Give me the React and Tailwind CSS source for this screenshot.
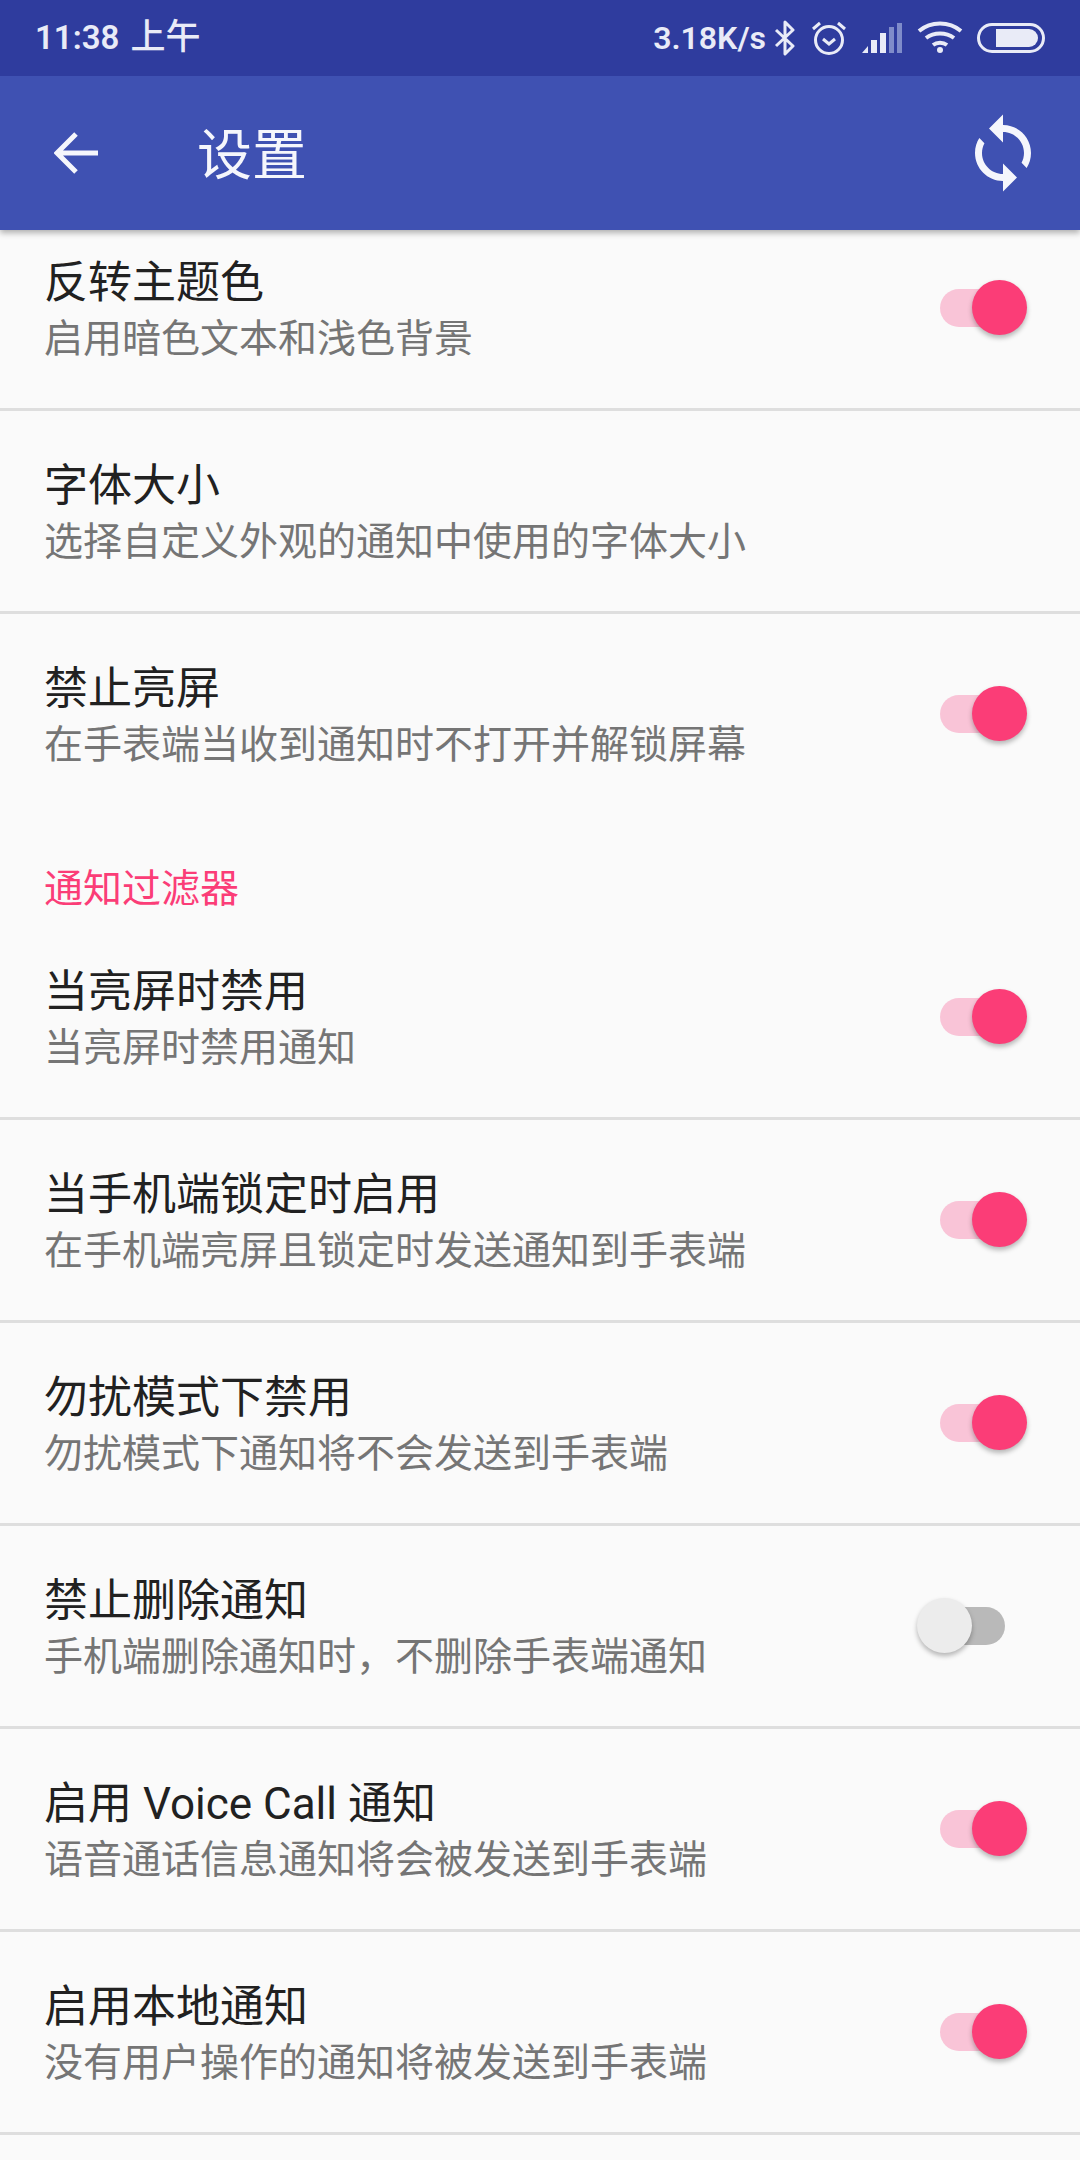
const cjk = { fontFamily: 'Roboto, "Noto Sans CJK SC", sans-serif' };

const generalRows = [
  { title: '反转主题色', sub: '启用暗色文本和浅色背景', on: true },
  { title: '字体大小', sub: '选择自定义外观的通知中使用的字体大小' },
  { title: '禁止亮屏', sub: '在手表端当收到通知时不打开并解锁屏幕', on: true, last: true },
];

const filterRows = [
  { title: '当亮屏时禁用', sub: '当亮屏时禁用通知', on: true },
  { title: '当手机端锁定时启用', sub: '在手机端亮屏且锁定时发送通知到手表端', on: true },
  { title: '勿扰模式下禁用', sub: '勿扰模式下通知将不会发送到手表端', on: true },
  { title: '禁止删除通知', sub: '手机端删除通知时，不删除手表端通知', on: false },
  { title: '启用 Voice Call 通知', sub: '语音通话信息通知将会被发送到手表端', on: true },
  { title: '启用本地通知', sub: '没有用户操作的通知将被发送到手表端', on: true },
];

const Toggle = ({ on }) => (
  <div className="relative h-[56px] w-[110px] shrink-0">
    <div className={`absolute left-[23px] top-[9px] h-[38px] w-[65px] rounded-full ${on ? 'bg-[#f9c4d7]' : 'bg-[#b9b9b9]'}`} />
    <div
      className={`absolute top-0 h-[55px] w-[55px] rounded-full shadow-[0_3px_5px_rgba(0,0,0,0.28)] ${
        on ? 'right-0 bg-[#fb3d77]' : 'left-0 bg-[#ececec]'
      }`}
    />
  </div>
);

const Row = ({ title, sub, on, last }) => (
  <div className={`flex h-[203px] items-center justify-between border-b-[3px] pl-[44px] pr-[53px] ${last ? 'border-transparent' : 'border-[#dedede]'}`}>
    <div className="pt-[6px]">
      <div className="text-[44px] leading-[56px] text-[#212121]">{title}</div>
      <div className="text-[39px] leading-[56px] text-[#757575]">{sub}</div>
    </div>
    {on !== undefined && <Toggle on={on} />}
  </div>
);

const StatusIcons = () => (
  <div className="flex items-center">
    <svg width="22" height="36" viewBox="0 0 22 36" fill="none" stroke="#e9ebf7" strokeWidth="3" className="ml-[8px]">
      <path d="M2 10l17 16-8 8V2l8 8L2 26" strokeLinejoin="round" />
    </svg>
    <svg width="38" height="36" viewBox="0 0 38 36" fill="none" stroke="#e9ebf7" strokeWidth="3" className="ml-[14px]">
      <circle cx="19" cy="20" r="13.5" />
      <path d="M13 19l6 5 6-5" />
      <path d="M3 9l7-6M35 9l-7-6" />
    </svg>
    <svg width="42" height="32" viewBox="0 0 42 32" className="ml-[13px]">
      <path d="M1 31h6v-7z" fill="#e9ebf7" />
      <rect x="10" y="18" width="6" height="13" fill="#e9ebf7" />
      <rect x="19" y="11" width="6" height="20" fill="#e9ebf7" />
      <rect x="28" y="5" width="5" height="26" fill="#7f8cca" />
      <rect x="36" y="1" width="5" height="30" fill="#7f8cca" />
    </svg>
    <svg width="46" height="34" viewBox="0 0 46 34" fill="none" stroke="#e9ebf7" strokeWidth="4" className="ml-[14px]">
      <path d="M2 10c12-10 30-10 42 0" />
      <path d="M9 17c8-6 20-6 28 0" />
      <path d="M16 24c4-3 10-3 14 0" />
      <circle cx="23" cy="29" r="3" fill="#e9ebf7" stroke="none" />
    </svg>
    <div className="ml-[14px] flex h-[30px] w-[68px] items-center rounded-full border-[3px] border-[#e9ebf7] pl-[16px] pr-[4px]">
      <div className="h-[18px] w-full rounded-r-full rounded-l-[2px] bg-[#e9ebf7]" />
    </div>
  </div>
);

export default function App() {
  return (
    <div className="h-[2160px] w-[1080px] overflow-hidden bg-[#fafafa]" style={cjk}>
      <div className="relative z-10 shadow-[0_3px_6px_rgba(0,0,0,0.3)]">
        <div className="flex h-[76px] items-center justify-between bg-[#2f3c9e] pl-[35px] pr-[35px] text-[#e9ebf7]">
          <div className="flex items-center text-[33px] font-semibold">
            11:38
            <span className="ml-[11px] text-[35px] font-medium">上午</span>
          </div>
          <div className="flex items-center">
            <span className="text-[32px] font-semibold">3.18K/s</span>
            <StatusIcons />
          </div>
        </div>
        <div className="flex h-[154px] items-center justify-between bg-[#3f51b2] pl-[54px] pr-[35px]">
          <div className="flex items-center">
            <svg width="44" height="44" viewBox="0 0 44 44" fill="none" stroke="#f5f6fc" strokeWidth="5">
              <path d="M44 22H4M22 3L3 22l19 19" />
            </svg>
            <div className="ml-[99px] pt-[4px] text-[55px] leading-[76px] text-[#f5f6fc]">设置</div>
          </div>
          <svg width="84" height="84" viewBox="0 0 24 24" fill="#f5f6fc">
            <path d="M12 4V1L8 5l4 4V6c3.31 0 6 2.69 6 6 0 1.01-.25 1.97-.7 2.8l1.46 1.46C19.54 15.03 20 13.57 20 12c0-4.42-3.58-8-8-8zm0 14c-3.31 0-6-2.69-6-6 0-1.01.25-1.97.7-2.8L5.24 7.74C4.46 8.97 4 10.43 4 12c0 4.42 3.58 8 8 8v3l4-4-4-4v3z" />
          </svg>
        </div>
      </div>

      <div className="-mt-[22px]">
        {generalRows.map((row) => (
          <Row key={row.title} {...row} />
        ))}
        <div className="flex h-[100px] items-center pl-[44px] pt-[44px] text-[39px] text-[#fb3d77]">通知过滤器</div>
        {filterRows.map((row) => (
          <Row key={row.title} {...row} />
        ))}
      </div>
    </div>
  );
}
